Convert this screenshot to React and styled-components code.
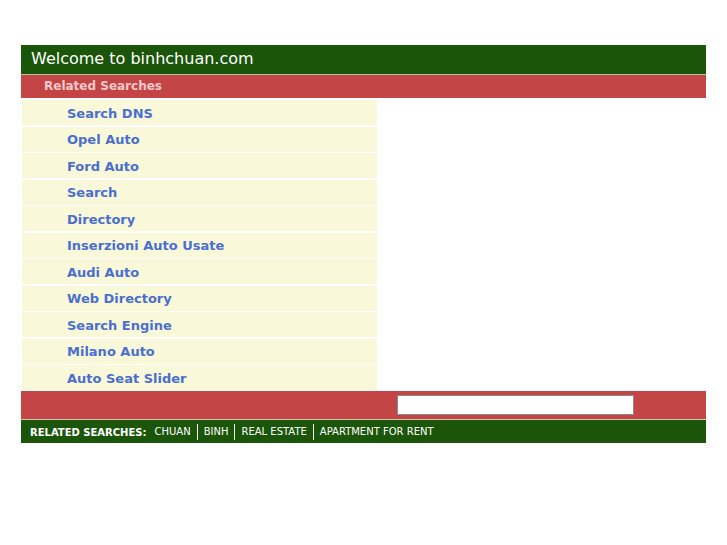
import styled, { createGlobalStyle } from "styled-components"

const GlobalStyle = createGlobalStyle`
body{
margin:0;
background:#fff;
font-family:"DejaVu Sans", Verdana, sans-serif;
}
`

const links = [
  "Search DNS",
  "Opel Auto",
  "Ford Auto",
  "Search",
  "Directory",
  "Inserzioni Auto Usate",
  "Audi Auto",
  "Web Directory",
  "Search Engine",
  "Milano Auto",
  "Auto Seat Slider",
]

const footerLinks = ["CHUAN", "BINH", "REAL ESTATE", "APARTMENT FOR RENT"]

const App = () => {
  return (
    <Page>
      <GlobalStyle />
      <Container>
        <Header>Welcome to binhchuan.com</Header>
        <SubHeader>Related Searches</SubHeader>
        <List>
          {links.map((l) => (
            <Row key={l}>
              <LinkText href="#">{l}</LinkText>
            </Row>
          ))}
        </List>
        <SearchBar>
          <SearchInput type="text" />
        </SearchBar>
        <Footer>
          <FooterLabel>RELATED SEARCHES:</FooterLabel>
          {footerLinks.map((f, i) => (
            <FooterLink key={f} $first={i === 0}>{f}</FooterLink>
          ))}
        </Footer>
      </Container>
    </Page>
  )
}

const Page = styled.div`
padding:45px 21px 0 21px;
`

const Container = styled.div`
width:685px;
display:flex;
flex-direction:column;
`

const Header = styled.div`
background:#1b5509;
color:#fff;
font-size:16px;
height:29px;
line-height:28px;
padding-left:10px;
border-bottom:1px solid #b8c4a8;
`

const SubHeader = styled.div`
background:#c44545;
color:#f3c9c9;
font-size:12px;
font-weight:bold;
height:23px;
line-height:22px;
padding-left:23px;
`

const List = styled.div`
display:flex;
flex-direction:column;
gap:1.5px;
padding:2px 0 1px 1px;
`

const Row = styled.div`
width:355px;
height:25px;
background:#f9f9d9;
display:flex;
align-items:center;
padding-left:45px;
padding-top:1px;
box-sizing:border-box;
`

const LinkText = styled.a`
color:#4a6fd0;
font-size:13px;
font-weight:bold;
text-decoration:none;
`

const SearchBar = styled.div`
background:#c44545;
height:28px;
display:flex;
align-items:center;
padding-left:376px;
border-bottom:1px solid #d8c8b8;
`

const SearchInput = styled.input`
width:237px;
height:20px;
box-sizing:border-box;
border:1px solid #8a8a8a;
background:#fff;
margin:0;
padding:0;
`

const Footer = styled.div`
background:#1b5509;
color:#fff;
height:23px;
display:flex;
align-items:center;
padding-left:9px;
padding-top:1px;
box-sizing:border-box;
font-size:10px;
`

const FooterLabel = styled.span`
font-weight:bold;
margin-right:8px;
`

const FooterLink = styled.span`
padding:0 6px;
border-left:${(p) => (p.$first ? "none" : "1px solid #fff")};
padding-left:${(p) => (p.$first ? "0" : "6px")};
line-height:16px;
`

export default App
